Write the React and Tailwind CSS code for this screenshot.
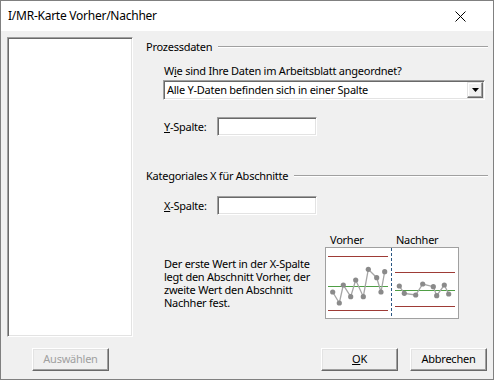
import React from "react";

const font = { fontFamily: '"Noto Sans", "Open Sans", sans-serif' };

function Sunken({ className = "", children }) {
  return (
    <div
      className={
        "bg-white border border-t-[#a0a0a0] border-l-[#a0a0a0] border-r-white border-b-white shadow-[inset_1px_1px_0_#696969,inset_-1px_-1px_0_#e3e3e3] " +
        className
      }
    >
      {children}
    </div>
  );
}

function Button({ children, disabled }) {
  return (
    <div
      className={
        "w-[77px] h-[23px] flex items-center justify-center bg-[#f0f0f0] border border-t-white border-l-white border-r-[#696969] border-b-[#696969] shadow-[inset_-1px_-1px_0_#a0a0a0,inset_1px_1px_0_#e3e3e3] text-[11px] " +
        (disabled ? "text-[#a0a0a0]" : "text-black")
      }
    >
      {children}
    </div>
  );
}

function GroupHeader({ children }) {
  return (
    <div className="h-[20px] flex items-center">
      <span className="leading-[14px]">{children}</span>
      <div className="flex-1 ml-[6px] h-[2px] border-t border-t-[#a0a0a0] border-b border-b-white" />
    </div>
  );
}

function Chart() {
  const left = [
    [7.7, 45], [14.3, 56], [18.3, 38], [25.7, 49.7], [30.7, 33],
    [38.3, 49.7], [43.3, 22.3], [51.7, 30.7], [56, 45], [59.7, 24.7],
  ];
  const right = [
    [74.3, 39], [79.3, 46.3], [90.7, 48], [97.7, 37], [108.3, 39.7],
    [111.7, 48.7], [119.3, 38], [123.7, 47],
  ];
  const pts = (a) => a.map((p) => p.join(",")).join(" ");
  return (
    <svg width="132" height="70" viewBox="1 1 132 70">
      <line x1="3" y1="9.5" x2="63" y2="9.5" stroke="#9e3b36" strokeWidth="1" />
      <line x1="3" y1="39.5" x2="63" y2="39.5" stroke="#4f9e45" strokeWidth="1" />
      <line x1="3" y1="63.5" x2="63" y2="63.5" stroke="#9e3b36" strokeWidth="1" />
      <line x1="70" y1="25.5" x2="130" y2="25.5" stroke="#9e3b36" strokeWidth="1" />
      <line x1="70" y1="43.5" x2="130" y2="43.5" stroke="#4f9e45" strokeWidth="1" />
      <line x1="70" y1="59.5" x2="130" y2="59.5" stroke="#9e3b36" strokeWidth="1" />
      <line x1="66.5" y1="1" x2="66.5" y2="71" stroke="#2a5683" strokeWidth="1" strokeDasharray="3 2" />
      <polyline points={pts(left)} fill="none" stroke="#a6a6a6" strokeWidth="1.3" />
      <polyline points={pts(right)} fill="none" stroke="#a6a6a6" strokeWidth="1.3" />
      {[...left, ...right].map(([x, y], i) => (
        <circle key={i} cx={x} cy={y} r="2.6" fill="#8a8a8a" />
      ))}
    </svg>
  );
}

export default function App() {
  return (
    <div
      style={font}
      className="w-[494px] h-[380px] border border-[#808080] bg-[#f0f0f0] flex flex-col text-[11px] tracking-[-0.25px] text-black overflow-hidden"
    >
      {/* Title bar */}
      <div className="h-[30px] bg-white flex items-center pl-[7px] pr-[27px]">
        <span className="text-[12px] flex-1">I/MR-Karte Vorher/Nachher</span>
        <svg width="11" height="11" viewBox="0 0 11 11">
          <path d="M0.5 0.5 L10.5 10.5 M10.5 0.5 L0.5 10.5" stroke="#000" strokeWidth="1" />
        </svg>
      </div>

      {/* Body */}
      <div className="flex pt-[6px]">
        <Sunken className="ml-[6px] w-[126px] h-[300px]" />

        <div className="ml-[13px] w-[342px] flex flex-col">
          <GroupHeader>Prozessdaten</GroupHeader>

          <div className="mt-[7px] h-[14px] leading-[14px] pl-[18px]">
            W<span className="underline">i</span>e sind Ihre Daten im Arbeitsblatt angeordnet?
          </div>

          <Sunken className="mt-[2px] ml-[17px] w-[322px] h-[20px] flex items-center">
            <span className="flex-1 pl-[3px] leading-[14px]">Alle Y-Daten befinden sich in einer Spalte</span>
            <div className="w-[16px] h-[16px] mr-[1px] bg-[#f0f0f0] border border-t-[#e3e3e3] border-l-[#e3e3e3] border-r-[#696969] border-b-[#696969] shadow-[inset_-1px_-1px_0_#a0a0a0,inset_1px_1px_0_#fff] flex items-center justify-center">
              <svg width="7" height="4" viewBox="0 0 7 4">
                <path d="M0 0 H7 L3.5 4 Z" fill="#000" />
              </svg>
            </div>
          </Sunken>

          <div className="mt-[17px] flex items-center pl-[18px]">
            <span className="w-[53px] leading-[14px]">
              <span className="underline">Y</span>-Spalte:
            </span>
            <Sunken className="w-[100px] h-[19px]" />
          </div>

          <div className="mt-[30px]">
            <GroupHeader>Kategoriales X für Abschnitte</GroupHeader>
          </div>

          <div className="mt-[10px] flex items-center pl-[18px]">
            <span className="w-[53px] leading-[14px]">
              <span className="underline">X</span>-Spalte:
            </span>
            <Sunken className="w-[100px] h-[19px]" />
          </div>

          <div className="mt-[18px] flex pl-[18px]">
            <div className="w-[161px] mt-[24px] leading-[13px]">
              Der erste Wert in der X-Spalte
              <br />
              legt den Abschnitt Vorher, der
              <br />
              zweite Wert den Abschnitt
              <br />
              Nachher fest.
            </div>
            <div className="w-[134px] flex flex-col">
              <div className="h-[14px] leading-[14px] flex">
                <span className="ml-[5px] w-[66px]">Vorher</span>
                <span>Nachher</span>
              </div>
              <div className="w-[134px] h-[72px] border border-[#a0a0a0] bg-white">
                <Chart />
              </div>
            </div>
          </div>
        </div>
      </div>

      {/* Buttons */}
      <div className="flex mt-[11px] pl-[31px] pr-[6px]">
        <Button disabled>Auswählen</Button>
        <div className="flex-1" />
        <Button>
          <span>
            <span className="underline">O</span>K
          </span>
        </Button>
        <div className="w-[12px]" />
        <Button>Abbrechen</Button>
      </div>
    </div>
  );
}
